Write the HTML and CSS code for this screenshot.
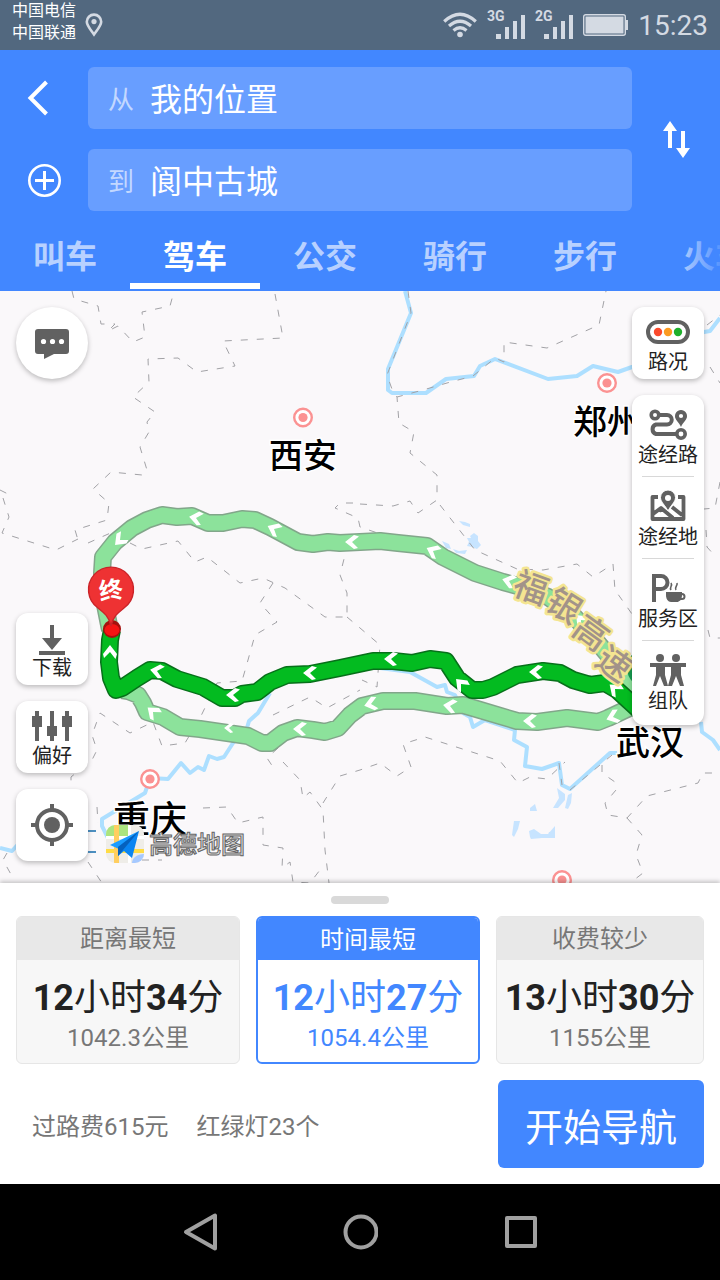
FILE: index.html
```html
<!DOCTYPE html>
<html lang="zh-CN">
<head>
  <meta charset="UTF-8">
  <meta name="viewport" content="width=device-width, initial-scale=1.0">
  <title>高德地图</title>
  <link rel="stylesheet" href="styles.css">
</head>
<body>
  <div class="status-bar">
    <div class="carriers">
      <span>中国电信</span>
      <span>中国联通</span>
    </div>
    <svg class="status-pin" width="18" height="24" viewBox="0 0 18 24" fill="none" stroke="#d4dae3" stroke-width="2.6">
      <path d="M9 21.5C5 16 1.8 12.500 1.800 8.800a7.200 7.200 0 0 1 14.400 0C16.200 12.500 13 16 9 21.500z"/>
      <circle cx="9" cy="8.600" r="2.600" fill="#d4dae3" stroke="none"/>
    </svg>
    <div class="status-icons">
      <svg width="34" height="26" viewBox="0 0 34 26" fill="none" stroke="#d4dae3" stroke-width="3.200">
        <path d="M1.200 9.500Q17-5 32.800 9.500M6 14Q17 4.500 28 14M10.500 18.500Q17 13 23.500 18.500"/>
        <circle cx="17" cy="22.500" r="2.800" fill="#d4dae3" stroke="none"/>
      </svg>
      <svg width="38" height="34" viewBox="0 -2 38 34" fill="#d4dae3">
        <text x="0" y="11" class="net-type">3G</text>
        <path d="M9 24h5v5h-5zM18 17h4v12h-4zM26 11h4v18h-4zM34 5h4v24h-4z"/>
      </svg>
      <svg width="38" height="34" viewBox="0 -2 38 34" fill="#d4dae3">
        <text x="0" y="11" class="net-type">2G</text>
        <path d="M9 24h5v5h-5zM18 17h4v12h-4zM26 11h4v18h-4zM34 5h4v24h-4z"/>
      </svg>
      <svg width="45" height="22" viewBox="0 0 45 22">
        <rect x="0.700" y="0.700" width="41.600" height="20.600" rx="2" fill="none" stroke="#d4dae3" stroke-width="1.400"/>
        <path d="M2.500 2.500h38v17h-38zM43 6h2v10h-2z" fill="#d4dae3"/>
      </svg>
      <time class="clock">15:23</time>
    </div>
  </div>

  <header class="header">
    <div class="route-form">
      <button type="button" class="icon-button back" aria-label="返回">
        <svg width="34" height="36" viewBox="0 0 34 36" fill="none" stroke="#fff" stroke-width="4">
          <path d="M19.500 2L3.500 18l16 16"/>
        </svg>
      </button>
      <div class="field">
        <label for="from">从</label>
        <input type="text" id="from" value="我的位置">
      </div>
      <button type="button" class="icon-button swap" aria-label="交换起终点">
        <svg width="28" height="38" viewBox="0 0 28 38" fill="#fff">
          <path d="M8 1l7 10h-5v17H6V11H1zM19 11h4v17h5l-7 10-7-10h5z"/>
        </svg>
      </button>
      <button type="button" class="icon-button" aria-label="添加途经点">
        <svg width="34" height="34" viewBox="0 0 34 34" fill="none" stroke="#fff" stroke-width="2.600">
          <circle cx="17.500" cy="17.500" r="15.200"/>
          <path d="M17.500 8v19M8 17.500h19" stroke-width="3"/>
        </svg>
      </button>
      <div class="field">
        <label for="to">到</label>
        <input type="text" id="to" value="阆中古城">
      </div>
    </div>
    <nav class="tabs">
      <button type="button" class="tab">叫车</button>
      <button type="button" class="tab active">驾车</button>
      <button type="button" class="tab">公交</button>
      <button type="button" class="tab">骑行</button>
      <button type="button" class="tab">步行</button>
      <button type="button" class="tab">火车</button>
    </nav>
  </header>

  <main class="map">
    <svg class="map-canvas" viewBox="0 291 720 592" preserveAspectRatio="xMidYMid slice">
      <defs>
        <path id="arrow" d="M-7 0L2-7L7-5.500L0 0L6 6L2 7Z" fill="#fff"/>
        <g id="city">
          <circle r="8.800" fill="#fff" stroke="#fb9292" stroke-width="2.400"/>
          <circle r="4.600" fill="#fb9292"/>
        </g>
      </defs>

      <!-- rivers and lakes -->
      <g class="river">
        <path d="M405 291L411 313L388 369V390L392 393H426L446 379L474 376L480 366L495 359L548 379L577 376L593 366L618 372L632 367L704 332L710 331L720 318"/>
        <path d="M270 693L258 713L249 721L247 728L233 743L224 757L217 759L209 756L204 770L198 767L190 773L181 763L168 779L150 778L145 793L102 819V826L108 838M0 848L12 851L22 840"/>
        <path d="M380 668L410 672L437 687L445 685L447 692L455 695L463 713L470 717L473 727L485 720L515 730L514 740L527 747L525 766L542 769L559 763L562 785L570 789L610 753H617M701 722L702 732L713 740L720 750"/>
      </g>
      <path class="lake" d="M459 521l6 1 5 2v3l-7-2zM470 536l4-3 4 3v5l3 4-4 4-5-2-5-1 2-4-2-4h4zM442 541l7 3 2 5-5-1zM453 549l6 2 8-1-2 4-9-1zM557 788l8 6v6l-7 8h-5l6-10zM568 795l4-2-1 10-3 6-3-1zM530 808l5-4 2 7h-7zM514 821h6l-2 8-4 8-2-2zM530 837l-1-6 5-2 7 5h7l7-8v12l-13 0-11 1zM549 832h6v6h-8z"/>
      <path d="M88 831h8M88 852h8" stroke="#4d8fc0" stroke-width="2"/>

      <!-- province borders -->
      <g class="border">
        <path d="M72 291L74 299L98 306L101 324H115L108 331L118 326L133 342L145 337L142 312L170 306L173 295"/>
        <path d="M275 294L283 338L223 341L235 366L197 372L178 358L148 359L149 382L133 397L155 412L147 422L149 432L140 447L147 470L142 475L111 472L93 489L109 503L107 520L75 530L78 540M88 543L115 531"/>
        <path d="M0 490L12 496M3 498L9 517L2 533L56 550L78 539"/>
        <path d="M130 543L142 549L178 541L195 562L207 557L240 583L263 578L285 588L325 617H347V593L340 575L345 555"/>
        <path d="M273 583L260 603L277 622L255 635L248 660L242 681L217 683L200 718L185 743L162 746L153 722L130 733L100 713L92 735L97 750L92 760L71 777V790"/>
        <path d="M353 503H340L335 508L358 518L360 527L398 540M360 504L393 506L410 501L418 513L437 500V475L410 453L414 432L399 423L397 397"/>
        <path d="M440 505L475 550L517 569L543 570L577 564L593 577L613 564L615 590L632 614"/>
        <path d="M408 291L411 313L387 375L393 392L397 397L423 390L447 383L473 376L495 358L504 362V342L547 348L599 325L606 291"/>
        <path d="M707 325L720 315M710 367L720 383M720 482L715 508L704 509M706 530L707 547L715 556M708 630L710 638H720M347 617L360 628L380 645L377 687L362 680"/>
        <path d="M273 715L310 697L327 708L360 690M278 748L267 758L275 770M283 762L300 780L303 798L310 792L323 810L325 850L329 883M323 803L340 776L360 770L380 763L397 776L411 767L403 744L425 737L500 761L518 783L530 777L547 779L565 762"/>
        <path d="M602 765V773L615 782L616 790L605 803L608 815L627 818L647 796L698 783L703 773H720M627 818L642 835L636 855L643 873L630 883M570 790L612 755M559 763L562 785"/>
        <path d="M203 808L227 807L238 823L263 817V845L283 848L282 868L290 862L293 882L310 883L323 866M97 807L98 823M88 862L102 883M7 853L3 860L13 878M142 860H162"/>
      </g>

      <!-- cities -->
      <use href="#city" x="303" y="417.500"/>
      <use href="#city" x="607" y="383"/>
      <use href="#city" x="150" y="779"/>
      <use href="#city" x="562" y="880"/>
      <g class="city-name">
        <text x="303" y="468">西安</text>
        <text x="607" y="434">郑州</text>
        <text x="650" y="755">武汉</text>
        <text x="150" y="833" class="large">重庆</text>
      </g>

      <!-- alternative routes -->
      <g class="route alt">
        <path class="casing" d="M122 690L128 691L138 695L143 703L147 712L163 717L180 727L200 729L248 736L262 743H270L283 733L297 728L313 730L325 732L338 728L350 715L362 706L383 701H415L447 706L463 705L480 710L517 721L537 722L567 718L598 722L608 718L640 703"/>
        <path class="casing" d="M110 630L107 615L102 590V573L103 557L115 542L132 528L147 520L162 515L177 517L192 516L208 523H223L242 519L255 520L270 527L298 542L313 544L328 542L340 543L380 541L398 543L427 546L443 557L475 573L503 582L525 588L548 597L572 614L598 643L618 667L636 695"/>
        <path class="inner" d="M110 630L107 615L102 590V573L103 557L115 542L132 528L147 520L162 515L177 517L192 516L208 523H223L242 519L255 520L270 527L298 542L313 544L328 542L340 543L380 541L398 543L427 546L443 557L475 573L503 582L525 588L548 597L572 614L598 643L618 667L636 695"/>
        <path class="inner" d="M122 690L128 691L138 695L143 703L147 712L163 717L180 727L200 729L248 736L262 743H270L283 733L297 728L313 730L325 732L338 728L350 715L362 706L383 701H415L447 706L463 705L480 710L517 721L537 722L567 718L598 722L608 718L640 703"/>
      </g>
      <circle cx="647" cy="668" r="20" fill="#179b50"/>

      <!-- selected route -->
      <g class="route main">
        <path class="casing" d="M112 630L110 640L109 662L111 678L116 690L122 688L137 678L150 670L162 671L177 679L203 687L222 698H235L242 694L257 692L270 682L287 675L310 674L340 668L373 661H393L412 663L430 659L446 661L457 678L472 690H483L493 687L517 675L543 671L560 673L573 680L590 685L605 683L617 690L640 711"/>
        <path class="inner" d="M112 630L110 640L109 662L111 678L116 690L122 688L137 678L150 670L162 671L177 679L203 687L222 698H235L242 694L257 692L270 682L287 675L310 674L340 668L373 661H393L412 663L430 659L446 661L457 678L472 690H483L493 687L517 675L543 671L560 673L573 680L590 685L605 683L617 690L640 711"/>
      </g>

      <!-- driving direction -->
      <use href="#arrow" transform="translate(120 540) rotate(-45)"/>
      <use href="#arrow" transform="translate(196 518) rotate(10)"/>
      <use href="#arrow" transform="translate(274 529) rotate(25)"/>
      <use href="#arrow" transform="translate(352 542)"/>
      <use href="#arrow" transform="translate(433 551) rotate(25)"/>
      <use href="#arrow" transform="translate(509 581) rotate(15)"/>
      <use href="#arrow" transform="translate(581 620) rotate(45)"/>
      <use href="#arrow" transform="translate(110 652) rotate(90)"/>
      <use href="#arrow" transform="translate(157 671) rotate(10)"/>
      <use href="#arrow" transform="translate(233 695)"/>
      <use href="#arrow" transform="translate(310 673)"/>
      <use href="#arrow" transform="translate(391 659)"/>
      <use href="#arrow" transform="translate(461 684) rotate(45)"/>
      <use href="#arrow" transform="translate(536 672)"/>
      <use href="#arrow" transform="translate(615 689) rotate(40)"/>
      <use href="#arrow" transform="translate(153 712) rotate(40)"/>
      <use href="#arrow" transform="translate(229 728) scale(0.700)"/>
      <use href="#arrow" transform="translate(300 729)"/>
      <use href="#arrow" transform="translate(371 704) rotate(-15)"/>
      <use href="#arrow" transform="translate(450 706) rotate(8)"/>
      <use href="#arrow" transform="translate(530 721)"/>
      <use href="#arrow" transform="translate(613 717) rotate(-20)"/>

      <g class="road-name">
        <text transform="translate(531 588) rotate(20)" y="12">福</text>
        <text transform="translate(564 606) rotate(32)" y="12">银</text>
        <text transform="translate(591 633) rotate(36)" y="12">高</text>
        <text transform="translate(614 664) rotate(36)" y="12">速</text>
      </g>

      <!-- destination -->
      <circle cx="112" cy="629" r="9" fill="#a5110e"/>
      <ellipse cx="112" cy="630" rx="7.500" ry="6" fill="#f51414"/>
      <path d="M111 626C109 616 103 612 98 608A22.500 22.500 0 1 1 124 608C119 612 113 616 111 626z" fill="#ee3233" stroke="#cb2328" stroke-width="1.400"/>
      <text class="pin-text" transform="translate(111 590) rotate(-8)" y="9">终</text>

      <!-- brand -->
      <svg x="106" y="825" width="38" height="38" viewBox="0 0 38 38">
        <clipPath id="logo"><rect width="38" height="38" rx="9"/></clipPath>
        <g clip-path="url(#logo)">
          <path d="M0 0h38v38H0z" fill="#efede8"/>
          <path d="M0 0h22v11H0z" fill="#abe47f"/>
          <path d="M0 11h38v3H0zM22 0h3v38h-3z" fill="#fff"/>
          <path d="M38 29c-7 0-12 4-12 9h12z" fill="#a6c9ff"/>
          <path d="M0 24h38v4H0z" fill="#ffdc45"/>
          <path d="M8 0h5v38H8z" fill="#ffce60"/>
        </g>
        <path d="M33 6L4 20l9 4z" fill="#1a9cff"/>
        <path d="M33 6L12 22v9l6-5 8 7z" fill="#0a85f2"/>
        <path d="M12 31V22L33 6 17 25z" fill="#0561bd"/>
      </svg>
      <text class="brand" x="149" y="853">高德地图</text>
    </svg>

    <div class="map-tools left">
      <button type="button" class="tool round" aria-label="消息">
        <svg width="36" height="32" viewBox="0 0 36 32">
          <path d="M4 2h28a3 3 0 0 1 3 3v19a3 3 0 0 1-3 3H20l-10 5v-5H4a3 3 0 0 1-3-3V5a3 3 0 0 1 3-3z" fill="#616161"/>
          <path d="M9.500 14.500h.01M18.500 14.500h.01M27.500 14.500h.01" stroke="#fff" stroke-width="5.200" stroke-linecap="round"/>
        </svg>
      </button>
      <button type="button" class="tool push">
        <svg width="32" height="32" viewBox="0 0 32 32" fill="#616161">
          <path d="M14 2h4v13h8l-10 12L6 15h8zM3 28h26v4H3z"/>
        </svg>
        <span>下载</span>
      </button>
      <button type="button" class="tool">
        <svg width="40" height="32" viewBox="0 0 40 32" fill="#616161">
          <path d="M3 0h4v5h3v11H7v14H3V16H0V5h3zM18 0h4v15h3v10h-3v5h-4v-5h-3V15h3zM33 0h4v5h3v11h-3v14h-4V16h-3V5h3z"/>
        </svg>
        <span>偏好</span>
      </button>
      <button type="button" class="tool centered" aria-label="定位">
        <svg width="42" height="42" viewBox="0 0 42 42" fill="none" stroke="#616161" stroke-width="4">
          <circle cx="21" cy="21" r="15"/>
          <path d="M21 0v6M21 36v6M0 21h6M36 21h6"/>
          <circle cx="21" cy="21" r="8" fill="#616161" stroke="none"/>
        </svg>
      </button>
    </div>

    <div class="map-tools right">
      <button type="button" class="tool">
        <svg width="44" height="32" viewBox="0 0 44 32">
          <rect x="2" y="5" width="40" height="20" rx="10" fill="none" stroke="#616161" stroke-width="4"/>
          <circle cx="12" cy="15" r="4.200" fill="#fb4a2c"/>
          <circle cx="22" cy="15" r="4.200" fill="#fb9b22"/>
          <circle cx="32" cy="15" r="4.200" fill="#1fb02c"/>
        </svg>
        <span>路况</span>
      </button>
      <div class="tool-stack">
        <button type="button">
          <svg width="40" height="36" viewBox="0 0 40 36" fill="none" stroke="#616161" stroke-width="4">
            <circle cx="7" cy="9" r="3.800" stroke-width="3.600"/>
            <path d="M11 9h8a4.500 4.500 0 0 1 0 9.500H8a5 5 0 0 0 0 9.500h20"/>
            <circle cx="33" cy="28" r="4.200" stroke-width="3.600"/>
            <path d="M33 21C31 16 27 14 27 10a6 6 0 0 1 12 0c0 4-4 6-6 11z" fill="#616161" stroke="none"/>
            <circle cx="33" cy="10" r="3.800" stroke-width="3.400" fill="#fff"/>
          </svg>
          <span>途经路</span>
        </button>
        <button type="button">
          <svg width="36" height="36" viewBox="0 0 36 36" fill="none" stroke="#616161" stroke-width="3.800">
            <path d="M8 9H2.500v22h31V9H28M3 26l8-6 12 10M9 23l4-3M22 19l10 8" stroke-linejoin="round"/>
            <path d="M18 23C15 17 10.500 14 10.500 9.500a7.500 7.500 0 0 1 15 0C25.500 14 21 17 18 23z" fill="#616161" stroke="#fff" stroke-width="1"/>
            <circle cx="18" cy="10" r="3" fill="#fff" stroke="none"/>
          </svg>
          <span>途经地</span>
        </button>
        <button type="button">
          <svg width="36" height="36" viewBox="0 0 36 36" fill="none" stroke="#616161">
            <path d="M4 32V6h7a6.500 6.500 0 0 1 0 13H4" stroke-width="4"/>
            <path d="M16 22h16v3c0 5-3 7-5 7h-6c-3 0-5-3-5-7z" fill="#616161" stroke="none"/>
            <path d="M30 24h2a2.500 2.500 0 0 1 0 5h-3" stroke-width="2"/>
            <path d="M21 20c-2-3 2-4 0-7M26 20c-2-3 2-4 1-7" stroke-width="1.600"/>
          </svg>
          <span>服务区</span>
        </button>
        <button type="button">
          <svg width="36" height="36" viewBox="0 0 36 36" fill="#616161">
            <circle cx="10" cy="6" r="4"/>
            <circle cx="26" cy="6" r="4"/>
            <path d="M0 11h36v4H31v8l3 11h-4l-4-10-4 10h-4l3-11v-8h-6v8l3 11h-4l-4-10-4 10H3l3-11v-8H0z"/>
          </svg>
          <span>组队</span>
        </button>
      </div>
    </div>
  </main>

  <section class="panel">
    <div class="handle"></div>
    <div class="plans">
      <button type="button" class="plan">
        <span class="plan-title">距离最短</span>
        <span class="plan-time"><b>12</b>小时<b>34</b>分</span>
        <span class="plan-distance">1042.3公里</span>
      </button>
      <button type="button" class="plan selected">
        <span class="plan-title">时间最短</span>
        <span class="plan-time"><b>12</b>小时<b>27</b>分</span>
        <span class="plan-distance">1054.4公里</span>
      </button>
      <button type="button" class="plan">
        <span class="plan-title">收费较少</span>
        <span class="plan-time"><b>13</b>小时<b>30</b>分</span>
        <span class="plan-distance">1155公里</span>
      </button>
    </div>
    <div class="summary">
      <span>过路费615元</span>
      <span>红绿灯23个</span>
      <button type="button" class="start-button">开始导航</button>
    </div>
  </section>

  <footer class="nav-bar">
    <button type="button" aria-label="后退">
      <svg width="36" height="40" viewBox="0 0 36 40" fill="none" stroke="#a0a0a0" stroke-width="4" stroke-linejoin="round">
        <path d="M33 3.500v33L4 20z"/>
      </svg>
    </button>
    <button type="button" aria-label="主页">
      <svg width="36" height="36" viewBox="0 0 36 36" fill="none" stroke="#a0a0a0" stroke-width="4">
        <circle cx="19" cy="18" r="15.500"/>
      </svg>
    </button>
    <button type="button" aria-label="最近任务">
      <svg width="34" height="34" viewBox="0 0 34 34" fill="none" stroke="#a0a0a0" stroke-width="4" stroke-linejoin="round">
        <path d="M4 3h28v28H4z"/>
      </svg>
    </button>
  </footer>
</body>
</html>
```

FILE: styles.css
```css
* {
  box-sizing: border-box;
}

body {
  display: flex;
  flex-direction: column;
  min-height: 100vh;
  margin: 0;
  font-family: Roboto, "Noto Sans CJK SC", sans-serif;
  background-color: #fff;
  color: #222;
}

button {
  margin: 0;
  padding: 0;
  border: none;
  background: none;
  font: inherit;
  color: inherit;
  cursor: pointer;
}

svg {
  display: block;
}

/* status bar */

.status-bar {
  display: flex;
  align-items: center;
  height: 50px;
  padding: 0 12px;
  background-color: #52687f;
  color: #d4dae3;
}

.carriers {
  display: flex;
  flex-direction: column;
  margin-bottom: 6px;
  font-size: 16px;
  line-height: 22px;
  color: #fff;
}

.status-pin {
  margin-left: 9px;
}

.status-icons {
  display: flex;
  align-items: center;
  gap: 10px;
  margin-left: auto;
}

.net-type {
  font-size: 14px;
  font-weight: 700;
}

.clock {
  font-size: 28px;
  line-height: 50px;
  padding-top: 2px;
}

/* search header */

.header {
  padding-top: 17px;
  background-color: #4287ff;
  color: #fff;
}

.route-form {
  display: grid;
  grid-template-columns: 88px 1fr 88px;
  row-gap: 20px;
}

.icon-button {
  display: flex;
  align-items: center;
  justify-content: center;
}

.swap {
  grid-column: 3;
  grid-row: 1 / 3;
}

.field {
  display: flex;
  align-items: center;
  height: 62px;
  padding: 0 20px 2px;
  border-radius: 6px;
  background-color: #689eff;
}

.field label {
  width: 42px;
  font-size: 26px;
  color: #c3d8ff;
}

.field input {
  flex: 1;
  min-width: 0;
  padding: 0;
  border: none;
  outline: none;
  background: none;
  font: inherit;
  font-size: 32px;
  color: #fff;
}

.tabs {
  position: relative;
  display: flex;
  margin-top: 12px;
  overflow: hidden;
}

/* fades out the tab that runs off the edge */
.tabs::after {
  content: "";
  position: absolute;
  top: 0;
  right: 0;
  width: 44px;
  height: 100%;
  background: linear-gradient(to right, rgba(66, 135, 255, 0), rgba(66, 135, 255, 0.8));
}

.tab {
  position: relative;
  flex: 0 0 130px;
  height: 68px;
  padding-bottom: 6px;
  font-size: 32px;
  font-weight: 700;
  color: #b8d1ff;
}

.tab.active {
  color: #fff;
}

.tab.active::after {
  content: "";
  position: absolute;
  left: 0;
  right: 0;
  bottom: 2px;
  height: 6px;
  background-color: #fff;
}

/* map */

.map {
  display: grid;
  flex: 1;
  grid-template-columns: 1fr 1fr;
  background-color: #faf8fa;
}

.map-canvas {
  grid-area: 1 / 1 / 2 / 3;
  width: 100%;
  height: 100%;
}

.river {
  fill: none;
  stroke: #addfff;
  stroke-width: 4;
  stroke-linejoin: round;
}

.lake {
  fill: #c7e4ff;
}

.border {
  fill: none;
  stroke: #a2a2a6;
  stroke-width: 1;
  stroke-dasharray: 7 9;
}

.city-name {
  font-size: 34px;
  font-weight: 500;
  text-anchor: middle;
  fill: #000;
  stroke: #fff;
  stroke-width: 3;
  paint-order: stroke;
}

.city-name .large {
  font-size: 37px;
}

.route {
  fill: none;
  stroke-linejoin: round;
}

.route .casing {
  stroke-width: 18;
}

.route .inner {
  stroke-width: 15;
}

.alt .casing {
  stroke: #82a68a;
}

.alt .inner {
  stroke: #8ce29b;
}

.main .casing {
  stroke: #07701a;
}

.main .inner {
  stroke: #03bb20;
}

.road-name {
  font-size: 34px;
  font-weight: 500;
  text-anchor: middle;
  fill: #a29389;
  stroke: #f4e591;
  stroke-width: 5;
  stroke-linejoin: round;
  paint-order: stroke;
}

.pin-text {
  font-size: 24px;
  font-weight: 700;
  text-anchor: middle;
  fill: #fff;
}

.brand {
  font-size: 24px;
  font-weight: 500;
  fill: #ddd;
  stroke: #666;
  stroke-width: 1;
}

.map-tools {
  z-index: 1;
  grid-row: 1;
  display: flex;
  flex-direction: column;
  gap: 16px;
  padding: 16px 16px 22px;
}

.map-tools.left {
  grid-column: 1;
  justify-self: start;
}

.map-tools.right {
  grid-column: 2;
  justify-self: end;
}

.tool {
  display: flex;
  flex-direction: column;
  align-items: center;
  width: 72px;
  height: 72px;
  padding-top: 10px;
  border-radius: 12px;
  background-color: #fff;
  box-shadow: 0 2px 5px rgba(0, 0, 0, 0.25);
}

.tool.round,
.tool.centered {
  justify-content: center;
  padding-top: 0;
}

.tool.round {
  border-radius: 50%;
}

.tool.push {
  margin-top: auto;
}

.tool span,
.tool-stack span {
  font-size: 20px;
  line-height: 26px;
}

.tool-stack {
  width: 72px;
  padding-bottom: 2px;
  border-radius: 12px;
  background-color: #fff;
  box-shadow: 0 2px 5px rgba(0, 0, 0, 0.25);
}

.tool-stack button {
  position: relative;
  display: flex;
  flex-direction: column;
  align-items: center;
  width: 100%;
  height: 82px;
  padding-top: 11px;
}

.tool-stack button + button::before {
  content: "";
  position: absolute;
  top: -1px;
  left: 10px;
  right: 10px;
  height: 1px;
  background-color: #d8d8d8;
}

/* route panel */

.panel {
  z-index: 1;
  padding: 13px 16px 16px;
  background-color: #fff;
  box-shadow: 0 -2px 4px rgba(0, 0, 0, 0.2);
}

.handle {
  width: 58px;
  height: 8px;
  margin: 0 auto 12px;
  border-radius: 4px;
  background-color: #d9d9d9;
}

/* the last card is a bit narrower than the others */
.plans {
  display: grid;
  grid-template-columns: 14fr 14fr 13fr;
  gap: 16px;
}

.plan {
  display: flex;
  flex-direction: column;
  height: 148px;
  border: 1px solid #e6e6e6;
  border-radius: 6px;
  background-color: #f7f7f7;
  overflow: hidden;
}

.plan-title {
  width: 100%;
  height: 43px;
  margin-bottom: 17px;
  background-color: #e8e8e8;
  font-size: 24px;
  line-height: 44px;
  color: #777;
}

.plan-time {
  width: 100%;
  font-size: 36px;
  line-height: 42px;
  white-space: nowrap;
}

.plan-distance {
  width: 100%;
  font-size: 24px;
  line-height: 38px;
  color: #777;
}

.plan.selected {
  border: 2px solid #4287ff;
  background-color: #fff;
  color: #4287ff;
}

.selected .plan-title {
  height: 42px;
  background-color: #4287ff;
  color: #fff;
}

.selected .plan-distance {
  color: #4287ff;
}

.summary {
  display: flex;
  align-items: center;
  gap: 28px;
  margin-top: 16px;
  padding-left: 16px;
  font-size: 24px;
  color: #777;
}

.start-button {
  width: 206px;
  height: 88px;
  margin-left: auto;
  border-radius: 6px;
  background-color: #4287ff;
  font-size: 38px;
  color: #fff;
}

/* system buttons */

.nav-bar {
  display: flex;
  justify-content: center;
  height: 96px;
  background-color: #000;
}

.nav-bar button {
  display: flex;
  align-items: center;
  justify-content: center;
  width: 160px;
}
```
